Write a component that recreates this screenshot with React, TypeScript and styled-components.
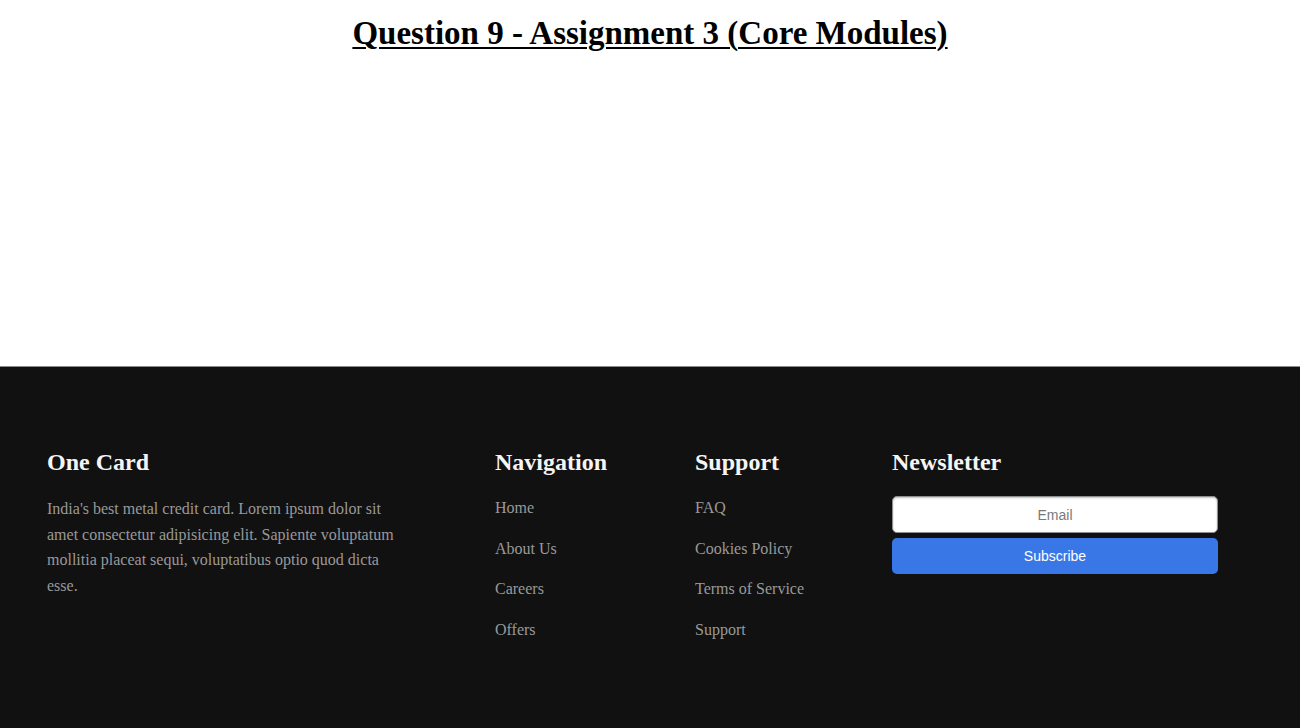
import React from "react";
import styled, { createGlobalStyle } from "styled-components";

const Global = createGlobalStyle`
  html, body { margin: 0; padding: 0; background: #ffffff; }
  body { font-family: "Liberation Serif", "Times New Roman", serif; }
  * { box-sizing: border-box; }
`;

const Page = styled.div`
  display: flex;
  flex-direction: column;
  min-height: 728px;
`;

const Main = styled.main`
  height: 366px;
  padding-top: 15px;
`;

const Title = styled.h1`
  margin: 0;
  text-align: center;
  font-size: 33px;
  font-weight: 700;
  color: #000;
  text-decoration: underline;
  text-decoration-thickness: 2px;
  text-underline-offset: 3px;
`;

const Footer = styled.footer`
  flex: 1;
  background: #111111;
  border-top: 1px solid #8a8a8a;
  padding: 82px 47px 60px;
  display: grid;
  grid-template-columns: 448px 200px 197px 1fr;
  align-items: start;
`;

const Column = styled.div`
  display: flex;
  flex-direction: column;
`;

const Heading = styled.h2`
  margin: 0 0 19px;
  font-size: 24px;
  font-weight: 700;
  color: #f5f5f5;
`;

const About = styled.p`
  margin: 1px 0 0;
  max-width: 362px;
  font-size: 16px;
  line-height: 1.6;
  color: #999999;
`;

const LinkList = styled.ul`
  list-style: none;
  margin: 0;
  padding: 0;
  display: flex;
  flex-direction: column;
  gap: 15px;
`;

const LinkItem = styled.li`
  font-size: 16px;
  line-height: 1.6;
  color: #999999;
`;

const Form = styled.form`
  display: flex;
  flex-direction: column;
  gap: 5px;
  width: 326px;
  margin-top: 1px;
`;

const EmailInput = styled.input`
  height: 37px;
  border: 1px solid #8f8f8f;
  border-radius: 5px;
  background: #ffffff;
  box-shadow: inset 0 1px 2px rgba(0, 0, 0, 0.25);
  text-align: center;
  font-family: "Liberation Sans", Arial, sans-serif;
  font-size: 14px;
  color: #333;
  &::placeholder { color: #7a7a7a; }
`;

const SubscribeButton = styled.button`
  height: 36px;
  border: none;
  border-radius: 5px;
  background: #3a77e6;
  color: #ffffff;
  font-family: "Liberation Sans", Arial, sans-serif;
  font-size: 14px;
  cursor: pointer;
`;

const navigation = ["Home", "About Us", "Careers", "Offers"];
const support = ["FAQ", "Cookies Policy", "Terms of Service", "Support"];

export default function App() {
  return (
    <Page>
      <Global />
      <Main>
        <Title>Question 9 - Assignment 3 (Core Modules)</Title>
      </Main>
      <Footer>
        <Column>
          <Heading>One Card</Heading>
          <About>
            India's best metal credit card. Lorem ipsum dolor sit amet consectetur
            adipisicing elit. Sapiente voluptatum mollitia placeat sequi,
            voluptatibus optio quod dicta esse.
          </About>
        </Column>
        <Column>
          <Heading>Navigation</Heading>
          <LinkList>
            {navigation.map((l) => (
              <LinkItem key={l}>{l}</LinkItem>
            ))}
          </LinkList>
        </Column>
        <Column>
          <Heading>Support</Heading>
          <LinkList>
            {support.map((l) => (
              <LinkItem key={l}>{l}</LinkItem>
            ))}
          </LinkList>
        </Column>
        <Column>
          <Heading>Newsletter</Heading>
          <Form onSubmit={(e) => e.preventDefault()}>
            <EmailInput type="email" placeholder="Email" />
            <SubscribeButton type="submit">Subscribe</SubscribeButton>
          </Form>
        </Column>
      </Footer>
    </Page>
  );
}
